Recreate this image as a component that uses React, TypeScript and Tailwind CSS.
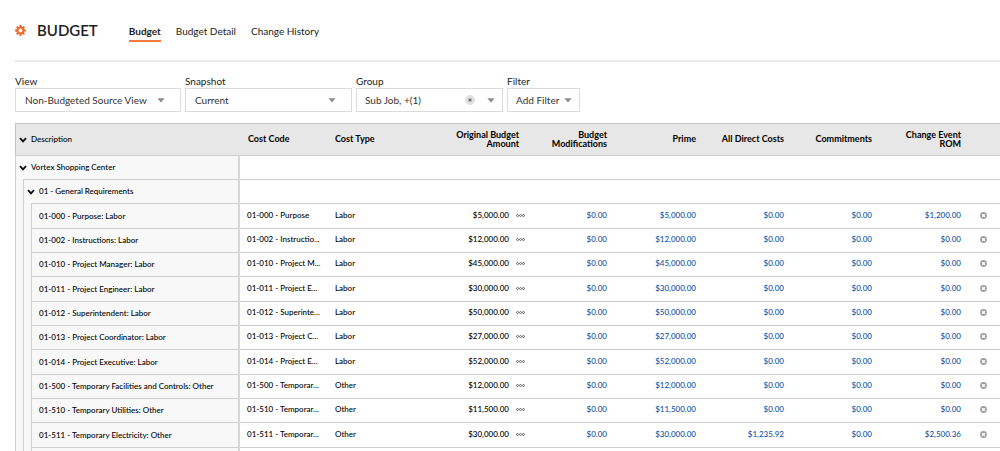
import { type ReactNode } from "react";

type Line = {
  code: string;
  name: string;
  short: string;
  type: string;
  original: string;
  direct?: string;
  rom?: string;
};

const lines: Line[] = [
  { code: "01-000", name: "Purpose", short: "Purpose", type: "Labor", original: "$5,000.00", rom: "$1,200.00" },
  { code: "01-002", name: "Instructions", short: "Instructio...", type: "Labor", original: "$12,000.00" },
  { code: "01-010", name: "Project Manager", short: "Project M...", type: "Labor", original: "$45,000.00" },
  { code: "01-011", name: "Project Engineer", short: "Project E...", type: "Labor", original: "$30,000.00" },
  { code: "01-012", name: "Superintendent", short: "Superinte...", type: "Labor", original: "$50,000.00" },
  { code: "01-013", name: "Project Coordinator", short: "Project C...", type: "Labor", original: "$27,000.00" },
  { code: "01-014", name: "Project Executive", short: "Project E...", type: "Labor", original: "$52,000.00" },
  { code: "01-500", name: "Temporary Facilities and Controls", short: "Temporar...", type: "Other", original: "$12,000.00" },
  { code: "01-510", name: "Temporary Utilities", short: "Temporar...", type: "Other", original: "$11,500.00" },
  { code: "01-511", name: "Temporary Electricity", short: "Temporar...", type: "Other", original: "$30,000.00", direct: "$1,235.92", rom: "$2,500.36" },
];

const teeth = [0, 45, 90, 135, 180, 225, 270, 315];

function Gear() {
  return (
    <svg viewBox="0 0 20 20" className="size-[11px]" aria-hidden="true">
      <circle cx="10" cy="10" r="5.4" fill="none" stroke="currentColor" strokeWidth="3.6" />
      {teeth.map((a) => (
        <path key={a} d="M7.8 4.2 L8.3 0.2 H11.7 L12.2 4.2 Z" fill="currentColor" transform={`rotate(${a} 10 10)`} />
      ))}
    </svg>
  );
}

function Caret() {
  return (
    <svg viewBox="0 0 8 5" className="pointer-events-none h-[5px] w-2 shrink-0 text-[#8c8c8c]" aria-hidden="true">
      <path d="M0.4 0.2 H7.6 L4 4.4 Z" fill="currentColor" />
    </svg>
  );
}

function Chevron() {
  return (
    <svg viewBox="0 0 8 6" className="h-[6px] w-2" aria-hidden="true">
      <path d="M1 1.2 L4 4.3 L7 1.2" fill="none" stroke="#111" strokeWidth="1.9" />
    </svg>
  );
}

function Toggle({ label }: { label: string }) {
  return (
    <button type="button" aria-expanded="true" className="flex items-center gap-1 pl-[3px]">
      <Chevron />
      <span>{label}</span>
    </button>
  );
}

function Picker({ id, label, value, width, pad, children }: { id: string; label: string; value: string; width: string; pad: string; children?: ReactNode }) {
  return (
    <div className={width}>
      <label htmlFor={id} className="block h-[14px] text-[10px] leading-[14px]">
        {label}
      </label>
      <div className={`flex h-6 items-center border border-[#dcdcdc] bg-white ${pad}`}>
        <select id={id} className="h-full min-w-0 flex-1 appearance-none bg-transparent pl-2 text-[10px] text-[#333] outline-none">
          <option>{value}</option>
        </select>
        {children}
        <Caret />
      </div>
    </div>
  );
}

function Description({ depth, children }: { depth: number; children?: ReactNode }) {
  return (
    <td className="h-[inherit] border-r-2 border-[#d6d6d6] bg-[#f8f8f8] p-0">
      <div className="flex h-full">
        {Array.from({ length: depth }, (_, i) => (
          <span key={i} className="w-2 shrink-0 border-l border-[#cfcfcf]" />
        ))}
        <div className="flex min-w-0 flex-1 items-center border-t border-l border-[#cfcfcf] whitespace-nowrap">{children}</div>
      </div>
    </td>
  );
}

const cell = "border-t border-[#cfcfcf] p-0 pb-[2px] whitespace-nowrap";
const head = "border-t border-[#c4c4c4] p-0 pb-[2px] font-bold";
const rowHeight = "h-6 nth-[3n]:h-[25px]";

function Money({ value }: { value: string }) {
  return (
    <td className={`${cell} pr-2 text-right text-[#1453a3]`}>
      <a href="#">{value}</a>
    </td>
  );
}

function GroupRow({ depth, label }: { depth: number; label: string }) {
  return (
    <tr className={rowHeight}>
      <Description depth={depth}>
        <Toggle label={label} />
      </Description>
      <td className={cell} colSpan={9} />
    </tr>
  );
}

export default function App() {
  return (
    <main className="h-screen overflow-hidden bg-white pl-[15px] font-['Lato',sans-serif] text-[#222]">
      <header className="flex h-[62px] items-center border-b-2 border-[#ebebeb]">
        <button type="button" aria-label="Settings" className="text-[#f2672a]">
          <Gear />
        </button>
        <h1 className="ml-[11px] text-[15px] leading-5 font-semibold text-[#222]">BUDGET</h1>
        <nav className="ml-[31px] flex gap-[15px] pt-1 text-[10px] leading-4">
          <a href="#" aria-current="page" className="border-b-2 border-[#f47a3d] pb-px font-bold">
            Budget
          </a>
          <a href="#">Budget Detail</a>
          <a href="#">Change History</a>
        </nav>
      </header>

      <form className="flex gap-1 pt-3">
        <Picker id="view" label="View" value="Non-Budgeted Source View" width="w-[166px]" pad="pl-px pr-[15px]" />
        <Picker id="snapshot" label="Snapshot" value="Current" width="w-[167px]" pad="pl-px pr-[15px]" />
        <Picker id="group" label="Group" value="Sub Job, +(1)" width="w-[147px]" pad="pr-[7px]">
          <button type="button" aria-label="Clear group" className="mr-3 shrink-0">
            <svg viewBox="0 0 10 10" className="size-[10px]" aria-hidden="true">
              <circle cx="5" cy="5" r="5" fill="#e2e2e2" />
              <path d="M3.6 3.6 L6.4 6.4 M6.4 3.6 L3.6 6.4" stroke="#666" strokeWidth="1.2" />
            </svg>
          </button>
        </Picker>
        <Picker id="filter" label="Filter" value="Add Filter" width="w-[73px]" pad="pr-[7px]" />
      </form>

      <table className="mt-[11px] w-full table-fixed border-separate border-spacing-0 text-[8px] leading-[11px] font-medium text-black">
        <colgroup>
          <col className="w-[225px]" />
          <col className="w-[87px]" />
          <col className="w-[88px]" />
          <col className="w-[112px]" />
          <col className="w-[88px]" />
          <col className="w-[89px]" />
          <col className="w-[88px]" />
          <col className="w-[88px]" />
          <col className="w-[89px]" />
          <col className="w-[31px]" />
        </colgroup>
        <thead className="bg-[#e7e7e7] text-right text-[9px] leading-[9px]">
          <tr className="h-8">
            <th className="border-t border-l border-[#c4c4c4] p-0 text-[8px] font-medium">
              <Toggle label="Description" />
            </th>
            <th className={`${head} pl-2 text-left`}>Cost Code</th>
            <th className={`${head} pl-2 text-left`}>Cost Type</th>
            <th className={`${head} pr-2`}>
              Original Budget
              <br />
              Amount
            </th>
            <th className={`${head} pr-2`}>
              Budget
              <br />
              Modifications
            </th>
            <th className={`${head} pr-2`}>Prime</th>
            <th className={`${head} pr-2`}>All Direct Costs</th>
            <th className={`${head} pr-2`}>Commitments</th>
            <th className={`${head} pr-2`}>
              Change Event
              <br />
              ROM
            </th>
            <th className={head} />
          </tr>
        </thead>
        <tbody>
          <GroupRow depth={0} label="Vortex Shopping Center" />
          <GroupRow depth={1} label="01 - General Requirements" />
          {lines.map((l) => (
            <tr key={l.code} className={rowHeight}>
              <Description depth={2}>
                <span className="pl-[7px]">
                  {l.code} - {l.name}: {l.type}
                </span>
              </Description>
              <td className={`${cell} pl-[7px]`}>
                {l.code} - {l.short}
              </td>
              <td className={`${cell} pl-2`}>{l.type}</td>
              <td className={`${cell} pr-[2px]`}>
                <div className="flex items-center justify-end gap-[7px]">
                  <span>{l.original}</span>
                  <button type="button" aria-label="Edit amount">
                    <svg viewBox="0 0 9 3" className="h-[3px] w-[9px]" aria-hidden="true">
                      {[1.5, 4.5, 7.5].map((x) => (
                        <circle key={x} cx={x} cy="1.5" r="1" fill="none" stroke="#555" strokeWidth="0.8" />
                      ))}
                    </svg>
                  </button>
                </div>
              </td>
              <Money value="$0.00" />
              <Money value={l.original} />
              <Money value={l.direct ?? "$0.00"} />
              <Money value="$0.00" />
              <Money value={l.rom ?? "$0.00"} />
              <td className={cell}>
                <button type="button" aria-label="Remove line" className="ml-[11px] block">
                  <svg viewBox="0 0 7 7" className="size-[7px]" aria-hidden="true">
                    <circle cx="3.5" cy="3.5" r="3.4" fill="#a0a0a0" />
                    <path d="M2.2 2.2 L4.8 4.8 M4.8 2.2 L2.2 4.8" stroke="#fff" strokeWidth="1.3" />
                  </svg>
                </button>
              </td>
            </tr>
          ))}
          <tr className={rowHeight}>
            <Description depth={2} />
            <td className={cell} colSpan={9} />
          </tr>
        </tbody>
      </table>
    </main>
  );
}
